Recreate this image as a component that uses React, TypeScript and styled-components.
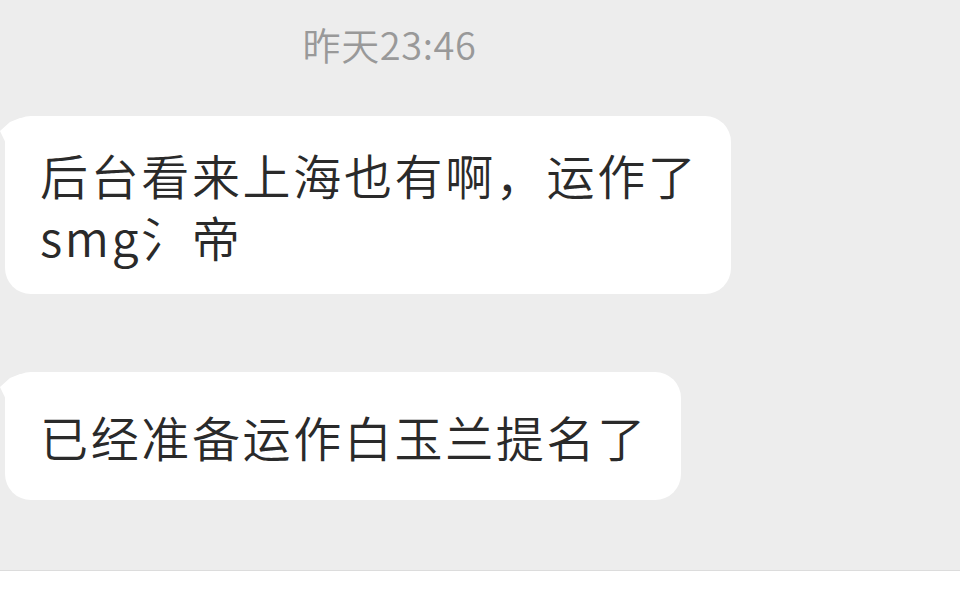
import React from "react";
import styled, { createGlobalStyle } from "styled-components";

const Global = createGlobalStyle`
  html, body { margin: 0; padding: 0; background: #ededed; }
  body { font-family: "Noto Sans CJK SC", "Noto Sans", sans-serif; }
`;

const Screen = styled.div`
  width: 960px;
  height: 596px;
  background: #ededed;
  display: flex;
  flex-direction: column;
  overflow: hidden;
`;

const Chat = styled.div`
  flex: 1;
  display: flex;
  flex-direction: column;
  align-items: flex-start;
  padding: 21px 0 0 5px;
`;

const Time = styled.div`
  align-self: center;
  margin-left: -186px;
  font-size: 38px;
  font-weight: 350;
  letter-spacing: 0.6px;
  color: #999999;
  line-height: 46px;
  margin-bottom: 49px;
`;

const Row = styled.div<{ $gap: number }>`
  position: relative;
  margin-bottom: ${(p) => p.$gap}px;
`;

const Bubble = styled.div<{ $pad: number }>`
  position: relative;
  background: #ffffff;
  border-radius: 26px;
  padding: ${(p) => p.$pad}px 33px ${(p) => p.$pad}px 35px;
  font-size: 48px;
  font-weight: 350;
  line-height: 62px;
  letter-spacing: 2.65px;
  color: #2a2a2a;
  &::before {
    content: "";
    position: absolute;
    left: -5px;
    top: 2px;
    width: 26px;
    height: 34px;
    background: #ffffff;
    clip-path: polygon(20px 0, 10px 4px, 0 13px, 10px 34px, 26px 34px, 26px 0);
  }
`;

const Footer = styled.div`
  height: 25px;
  background: #ffffff;
  border-top: 1px solid #dcdcdc;
`;

export default function App() {
  return (
    <Screen>
      <Global />
      <Chat>
        <Time>昨天23:46</Time>
        <Row $gap={78}>
          <Bubble $pad={27}>
            后台看来上海也有啊，运作了
            <br />
            smg氵帝
          </Bubble>
        </Row>
        <Row $gap={0}>
          <Bubble $pad={33}>已经准备运作白玉兰提名了</Bubble>
        </Row>
      </Chat>
      <Footer />
    </Screen>
  );
}
